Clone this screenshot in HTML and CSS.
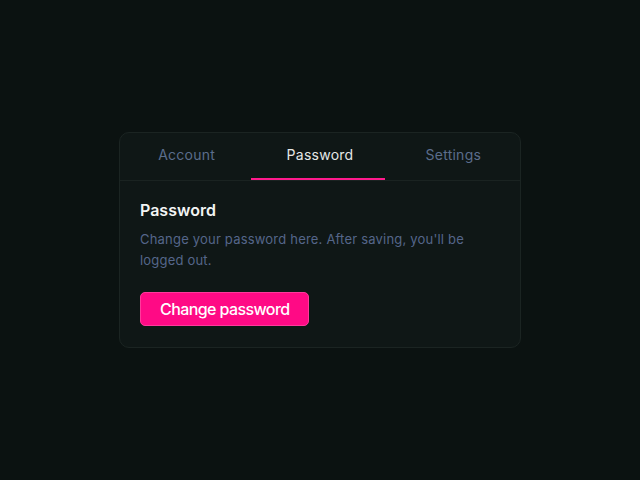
FILE: index.html
```html
<!DOCTYPE html>
<html>
<head>
<meta charset="utf-8">
<link rel="stylesheet" href="styles.css">
</head>
<body>
<div class="page">
  <div class="card">
    <div class="tabs">
      <div class="tab">Account</div>
      <div class="tab active">Password</div>
      <div class="tab">Settings</div>
    </div>
    <div class="content">
      <h2 class="title">Password</h2>
      <p class="desc">Change your password here. After saving, you'll be logged out.</p>
      <button class="btn">Change password</button>
    </div>
  </div>
</div>
</body>
</html>
```

FILE: styles.css
```css
* { box-sizing: border-box; }
html, body { margin: 0; padding: 0; }
body {
  background: #0b1211;
  font-family: Inter, "Noto Sans", sans-serif;
  width: 640px;
  height: 480px;
}
.page {
  height: 480px;
  display: flex;
  align-items: center;
  justify-content: center;
}
.card {
  width: 402px;
  height: 216px;
  background: #0f1716;
  border: 1px solid #1b2422;
  border-radius: 10px;
  display: flex;
  flex-direction: column;
}
.tabs {
  display: grid;
  grid-template-columns: 1fr 1fr 1fr;
  height: 48px;
  border-bottom: 1px solid #1a2321;
}
.tab {
  position: relative;
  display: flex;
  align-items: center;
  justify-content: center;
  font-size: 14px;
  letter-spacing: 0.25px;
  color: #5b6d8c;
  padding-bottom: 4px;
}
.tab.active {
  color: #e4e7e6;
}
.tab.active::after {
  content: "";
  position: absolute;
  left: -2px;
  right: 2px;
  bottom: 0;
  height: 2px;
  background: #ff1a8c;
}
.content {
  padding: 19px 20px 0 20px;
}
.title {
  margin: 0;
  font-size: 16px;
  line-height: 20px;
  font-weight: 600;
  color: #f2f4f3;
  letter-spacing: 0;
}
.desc {
  margin: 9px 0 0 0;
  font-size: 13px;
  line-height: 21px;
  letter-spacing: 0.2px;
  color: #55668a;
}
.btn {
  margin-top: 21px;
  height: 34px;
  padding: 0 19px;
  background: #ff0a85;
  border: 1px solid #ff3a9c;
  border-radius: 5px;
  color: #fff;
  font-family: Inter, "Noto Sans", sans-serif;
  font-size: 16px;
  font-weight: 500;
  letter-spacing: -0.6px;
}
```
